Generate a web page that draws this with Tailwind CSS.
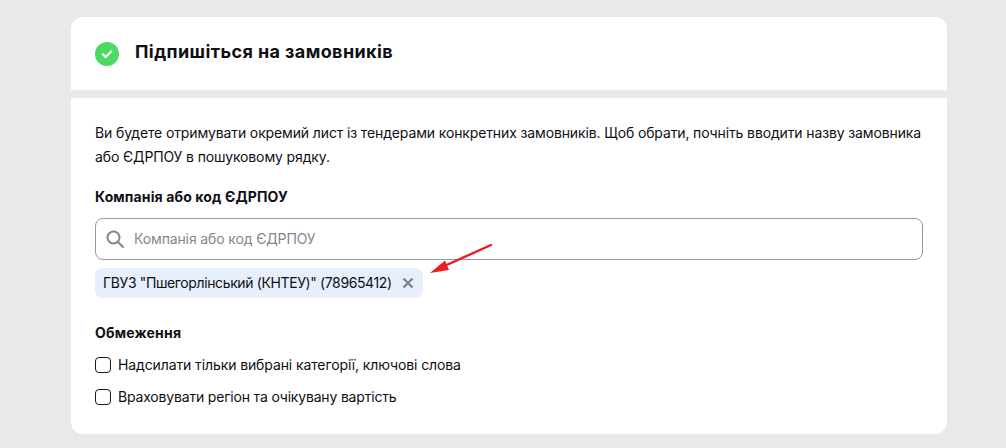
<!DOCTYPE html>
<html lang="en">
<head>
    <meta charset="UTF-8">
    <meta name="viewport" content="width=device-width, initial-scale=1.0">
    <title>Підпишіться на замовників</title>
    <script src="https://cdn.jsdelivr.net/npm/@tailwindcss/browser@4"></script>
</head>
<body class="bg-[#e9e9e9] font-['Inter',sans-serif] text-[#0f0f14] h-[448px] overflow-hidden">
    <div class="w-[876px] ml-[71px] pt-[17px]">
        <!-- header card -->
        <div class="h-[73px] bg-white rounded-t-[12px] flex items-center px-6 gap-4">
            <svg class="w-6 h-6" viewBox="0 0 24 24">
                <circle cx="12" cy="12" r="12" fill="#4cd964"/>
                <path d="M7.8 12.3l2.9 2.8 5.5-5.6" fill="none" stroke="#fff" stroke-width="2.2" stroke-linecap="round" stroke-linejoin="round"/>
            </svg>
            <h2 class="text-lg font-bold tracking-[0.4px] mb-[3px]">Підпишіться на замовників</h2>
        </div>

        <!-- body card -->
        <div class="relative h-[336px] mt-2 bg-white rounded-b-[12px] px-6 pt-[23px]">
            <p class="text-sm leading-6 tracking-[-0.13px]">Ви будете отримувати окремий лист із тендерами конкретних замовників. Щоб обрати, почніть вводити назву замовника або ЄДРПОУ в пошуковому рядку.</p>

            <div class="mt-4 text-sm leading-6 font-bold tracking-[0.13px]">Компанія або код ЄДРПОУ</div>
            <div class="mt-[9px] h-[42px] border border-[#9a9a9e] rounded-[8px] flex items-center pl-[9px] gap-[9px] pb-px">
                <svg class="w-[20px] h-[20px]" viewBox="0 0 20 20" fill="none" stroke="#7f8791" stroke-width="2" stroke-linecap="round">
                    <circle cx="8.5" cy="8.5" r="6"/>
                    <path d="M13 13l5 5"/>
                </svg>
                <span class="text-sm tracking-[-0.13px] text-[#7f8791]">Компанія або код ЄДРПОУ</span>
            </div>

            <div class="mt-2 inline-flex items-center h-[30px] pl-2 pr-[9px] gap-[10px] bg-[#e6effb] rounded-[8px]">
                <span class="text-sm tracking-[-0.38px]">ГВУЗ "Пшегорлінський (КНТЕУ)" (78965412)</span>
                <svg class="w-3 h-3" viewBox="0 0 12 12" stroke="#7d8590" stroke-width="2.4">
                    <path d="M1.5 1.5l9 9M10.5 1.5l-9 9"/>
                </svg>
            </div>

            <div class="mt-[23px] text-sm leading-6 font-bold tracking-[0.2px]">Обмеження</div>
            <label class="mt-[8px] flex items-center gap-[7px] h-6 text-sm tracking-[-0.11px]">
                <span class="w-4 h-4 border-[1.5px] border-[#1a1a1a] rounded-[4px]"></span>
                Надсилати тільки вибрані категорії, ключові слова
            </label>
            <label class="mt-2 flex items-center gap-[7px] h-6 text-sm tracking-[-0.18px]">
                <span class="w-4 h-4 border-[1.5px] border-[#1a1a1a] rounded-[4px]"></span>
                Враховувати регіон та очікувану вартість
            </label>

            <!-- annotation arrow -->
            <svg class="absolute left-[355px] top-[142px] w-[70px] h-[36px]" viewBox="0 0 70 36" fill="none">
                <path d="M65 5L14 28" stroke="#ee1c1c" stroke-width="2.4" stroke-linecap="round"/>
                <path d="M4 33L19 20.5L23 30Z" fill="#ee1c1c"/>
            </svg>
        </div>
    </div>
</body>
</html>
